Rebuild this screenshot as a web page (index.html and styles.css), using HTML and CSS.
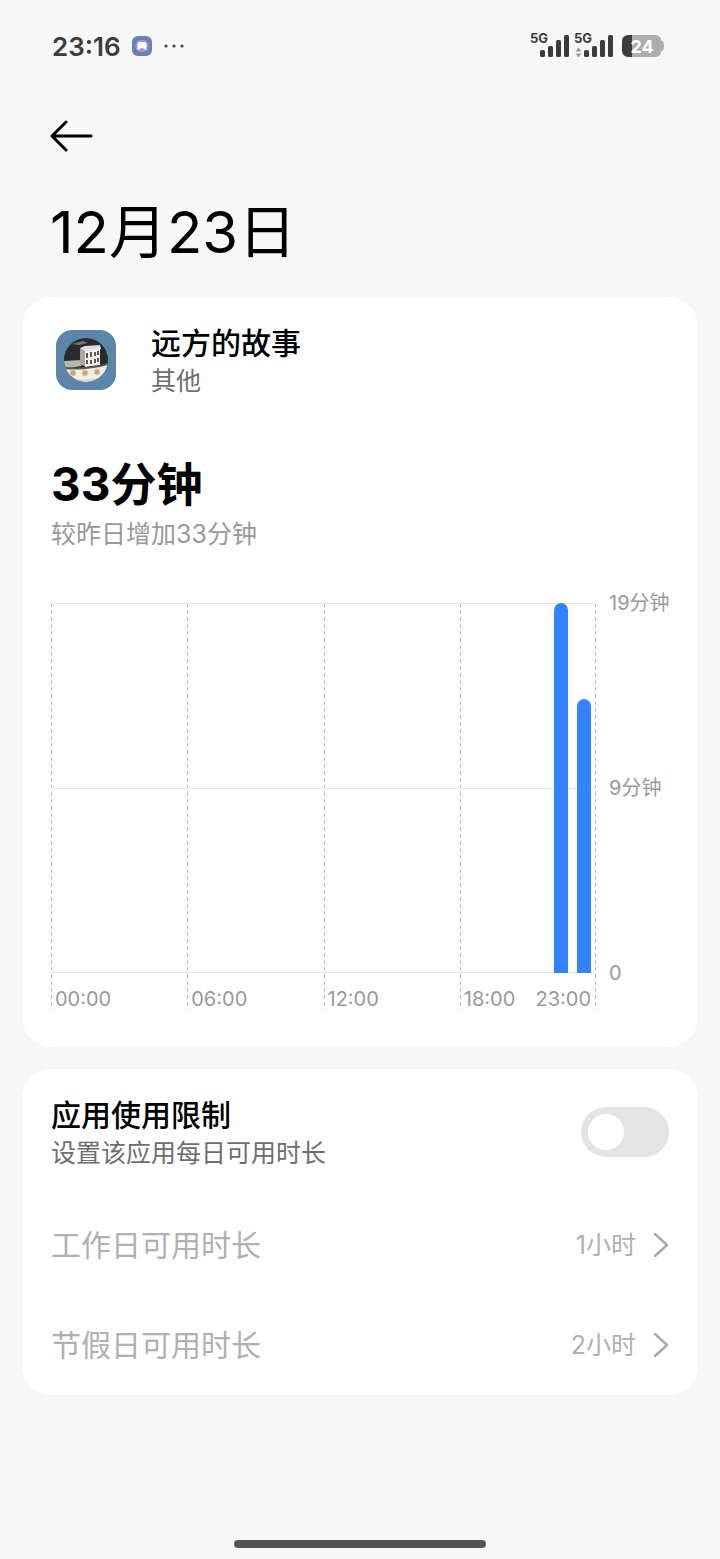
FILE: index.html
```html
<!DOCTYPE html>
<html lang="zh-CN">
<head>
    <meta charset="UTF-8">
    <meta name="viewport" content="width=device-width, initial-scale=1.0">
    <title>12月23日</title>
    <link rel="stylesheet" href="styles.css">
</head>
<body>
    <div class="status-bar">
        <span class="clock">23:16</span>
        <svg class="notice" width="20" height="20" viewBox="0 0 20 20">
            <rect width="20" height="20" rx="6" fill="#6484ad"/>
            <rect x="3.500" y="4" width="13" height="12" rx="5" fill="#a98be8"/>
            <path d="M5.500 8q0-2 2-2h5q2 0 2 2v5.500h-2l-2.500-2-2.500 2h-2z" fill="#fff"/>
        </svg>
        <svg class="dots" width="20" height="4" viewBox="0 0 20 4" fill="#444">
            <circle cx="2" cy="2" r="1.600"/><circle cx="10" cy="2" r="1.600"/><circle cx="18" cy="2" r="1.600"/>
        </svg>
        <svg class="signals" width="136" height="32" viewBox="0 0 136 32">
            <g fill="#3c3c3c">
                <text x="2" y="13" class="net">5G</text>
                <rect x="12" y="20" width="5" height="7" rx="1.500"/>
                <rect x="20" y="16" width="5" height="11" rx="1.500"/>
                <rect x="28" y="10" width="5" height="17" rx="1.500"/>
                <rect x="36" y="5" width="5" height="22" rx="1.500"/>
                <text x="46" y="13" class="net">5G</text>
                <rect x="56" y="20" width="5" height="7" rx="1.500"/>
                <rect x="64" y="16" width="5" height="11" rx="1.500"/>
                <rect x="72" y="10" width="5" height="17" rx="1.500"/>
                <rect x="80" y="5" width="5" height="22" rx="1.500"/>
            </g>
            <path d="M47.500 21.500l3-4 3 4zM47.500 23.500l3 4 3-4z" fill="#999"/>
            <path d="M101 5h25q7 0 7 5.500 3 .5 3 5.500t-3 5.500q0 5.500-7 5.500h-25q-7 0-7-7v-8q0-7 7-7z" fill="#adadad"/>
            <path d="M104 5h-3q-7 0-7 7v8q0 7 7 7h3z" fill="#3c3c3c"/>
            <text x="114" y="23" class="level">24</text>
        </svg>
    </div>

    <header class="page-head">
        <button class="back" type="button" aria-label="返回">
            <svg width="44" height="32" viewBox="0 0 44 32" fill="none" stroke="#000" stroke-width="3" stroke-linecap="round" stroke-linejoin="round">
                <path d="M41 16H2M16 2L2 16l14 14"/>
            </svg>
        </button>
        <h1>12月23日</h1>
    </header>

    <main>
        <section class="card usage">
            <div class="app">
                <svg class="app-icon" width="60" height="60" viewBox="0 0 60 60">
                    <defs>
                        <clipPath id="disc"><circle cx="30" cy="30" r="22"/></clipPath>
                    </defs>
                    <rect width="60" height="60" rx="16" fill="#5b86aa"/>
                    <g clip-path="url(#disc)">
                        <rect x="8" y="8" width="44" height="44" fill="#292a2c"/>
                        <path d="M16 14l11-3 5 2-9 2z" fill="#77736e"/>
                        <path d="M8 31l17-1v6l-17 3z" fill="#b7b5b0"/>
                        <path d="M24 18l5-2 15-1 1 4-16 3z" fill="#dedbd4"/>
                        <path d="M24 18l5 4v14l-5-1z" fill="#aaa7a0"/>
                        <path d="M29 21l15-3v17l-15 2z" fill="#f2f0eb"/>
                        <path d="M31 23v5M35 22v5M39 22v4M42 21v4M31 30v4M35 30v4M39 29v4M42 28v4" stroke="#34332f" stroke-width="1.600"/>
                        <path d="M8 38q22 2 44-4v18H8z" fill="#f1efeb"/>
                        <path d="M8 38q23 2 44-4" fill="none" stroke="#5a5650" stroke-width="2"/>
                        <g fill="#c9aa6d" stroke="#e3cf9f" stroke-width="1">
                            <circle cx="17" cy="43" r="3"/><circle cx="29" cy="43" r="3"/><circle cx="41" cy="42" r="3"/>
                        </g>
                        <path d="M14 49q16 3 32-1" fill="none" stroke="#c8c5c0" stroke-width="1"/>
                    </g>
                </svg>
                <div>
                    <h2>远方的故事</h2>
                    <p class="sub">其他</p>
                </div>
            </div>

            <p class="total">33分钟</p>
            <p class="compare">较昨日增加33分钟</p>

            <div class="chart">
                <div class="columns"><i></i><i></i><i></i><i></i></div>
                <div class="bars">
                    <div class="bar hour-22" style="height: 100%"></div>
                    <div class="bar hour-23" style="height: 74%"></div>
                </div>
                <div class="y-axis"><span>19分钟</span><span>9分钟</span><span>0</span></div>
                <div class="x-axis">
                    <div><span>00:00</span></div>
                    <div><span>06:00</span></div>
                    <div><span>12:00</span></div>
                    <div><span>18:00</span><span>23:00</span></div>
                </div>
            </div>
        </section>

        <section class="card limits">
            <div class="limit-row">
                <label for="limit">
                    <span class="label-title">应用使用限制</span>
                    <span class="sub">设置该应用每日可用时长</span>
                </label>
                <input class="switch" type="checkbox" role="switch" id="limit">
            </div>
            <button class="option" type="button" disabled>
                <span>工作日可用时长</span>
                <span class="value">1小时</span>
                <svg width="16" height="26" viewBox="0 0 16 26" fill="none" stroke="#aaa" stroke-width="2.500" stroke-linecap="round" stroke-linejoin="round"><path d="M2 2l12 11L2 24"/></svg>
            </button>
            <button class="option" type="button" disabled>
                <span>节假日可用时长</span>
                <span class="value">2小时</span>
                <svg width="16" height="26" viewBox="0 0 16 26" fill="none" stroke="#aaa" stroke-width="2.500" stroke-linecap="round" stroke-linejoin="round"><path d="M2 2l12 11L2 24"/></svg>
            </button>
        </section>
    </main>

    <div class="home-bar"></div>
</body>
</html>
```

FILE: styles.css
```css
* {
    box-sizing: border-box;
}
body {
    margin: 0;
    min-height: 100vh;
    display: flex;
    flex-direction: column;
    background-color: #f7f7f7;
    color: #000;
    font-family: Inter, "Noto Sans CJK SC", sans-serif;
}
h1, h2, p {
    margin: 0;
}
button {
    padding: 0;
    border: none;
    background: none;
    font-family: inherit;
}

/* status bar */
.status-bar {
    display: flex;
    align-items: center;
    height: 92px;
    padding: 0 56px 0 52px;
    color: #3c3c3c;
}
.clock {
    font-size: 26px;
    font-weight: 600;
}
.notice {
    margin-left: 11px;
}
.dots {
    margin-left: 12px;
}
.signals {
    margin-left: auto;
}
.net {
    font-size: 13px;
    font-weight: 700;
}
.level {
    font-size: 18px;
    font-weight: 700;
    fill: #fff;
    text-anchor: middle;
}

/* page header */
.page-head {
    padding: 28px 48px 0 50px;
}
.back {
    display: block;
    height: 32px;
    cursor: pointer;
}
h1 {
    margin: 35px 0 20px;
    font-size: 58px;
    line-height: 90px;
    font-weight: 400;
}

/* cards */
main {
    display: flex;
    flex-direction: column;
    gap: 22px;
    padding: 0 22px;
}
.card {
    padding: 0 29px;
    border-radius: 30px;
    background-color: #fff;
}
.usage {
    padding-top: 25px;
    padding-bottom: 37px;
}
.app {
    display: flex;
    align-items: center;
    gap: 35px;
    padding-left: 5px;
}
h2, .label-title {
    display: block;
    font-size: 30px;
    line-height: 42px;
    font-weight: 500;
}
.sub {
    display: block;
    font-size: 25px;
    line-height: 34px;
    color: #6e6e6e;
}
.total {
    margin-top: 56px;
    font-size: 46px;
    line-height: 60px;
    font-weight: 700;
}
.compare {
    font-size: 25px;
    line-height: 40px;
    color: #999;
}

/* chart */
.chart {
    display: grid;
    grid-template-columns: 1fr 60px;
    grid-template-rows: 370px 37px;
    column-gap: 13px;
    margin-top: 49px;
    font-size: 20px;
    line-height: 28px;
    color: #999;
}
.columns {
    grid-area: 1 / 1 / 3 / 2;
    display: grid;
    grid-template-columns: repeat(4, 1fr);
    background: repeating-linear-gradient(#bbb 0 4px, transparent 4px 7px) right / 1px 100% no-repeat;
}
.columns i {
    background: repeating-linear-gradient(#bbb 0 4px, transparent 4px 7px) left / 1px 100% no-repeat;
}
.bars {
    grid-area: 1 / 1;
    display: grid;
    grid-template-columns: repeat(24, 1fr);
    align-items: end;
    justify-items: center;
    padding-right: 1px;
    background:
        linear-gradient(#e4e4e4, #e4e4e4) top / 100% 1px no-repeat,
        linear-gradient(#e9e9e9, #e9e9e9) center / 100% 1px no-repeat,
        linear-gradient(#e4e4e4, #e4e4e4) bottom / 100% 1px no-repeat;
}
.bar {
    grid-row: 1;
    width: 14px;
    border-radius: 7px 7px 0 0;
    background-color: #3482ff;
}
.hour-22 {
    grid-column: 23;
}
.hour-23 {
    grid-column: 24;
}
.y-axis {
    grid-area: 1 / 2;
    display: flex;
    flex-direction: column;
    justify-content: space-between;
    margin: -14px 0;
    white-space: nowrap;
}
.x-axis {
    grid-area: 2 / 1;
    display: grid;
    grid-template-columns: repeat(4, 1fr);
    padding-top: 12px;
}
.x-axis div {
    display: flex;
    justify-content: space-between;
    padding: 0 5px 0 4px;
}

/* limits */
.limit-row {
    display: flex;
    align-items: center;
    justify-content: space-between;
    height: 126px;
}
.switch {
    appearance: none;
    display: flex;
    align-items: center;
    width: 88px;
    height: 50px;
    margin: 0;
    padding: 0 7px;
    border-radius: 25px;
    background-color: #e4e4e4;
}
.switch::before {
    content: "";
    width: 36px;
    height: 36px;
    border-radius: 50%;
    background-color: #fff;
}
.switch:checked {
    justify-content: flex-end;
    background-color: #3482ff;
}
.option {
    display: flex;
    align-items: center;
    width: 100%;
    height: 100px;
    font-size: 30px;
    line-height: 40px;
    color: #b0b0b0;
}
.option .value {
    margin-left: auto;
    margin-right: 17px;
    font-size: 25px;
}

.home-bar {
    width: 35%;
    height: 8px;
    margin: auto auto 11px;
    border-radius: 4px;
    background-color: #555;
}
```
